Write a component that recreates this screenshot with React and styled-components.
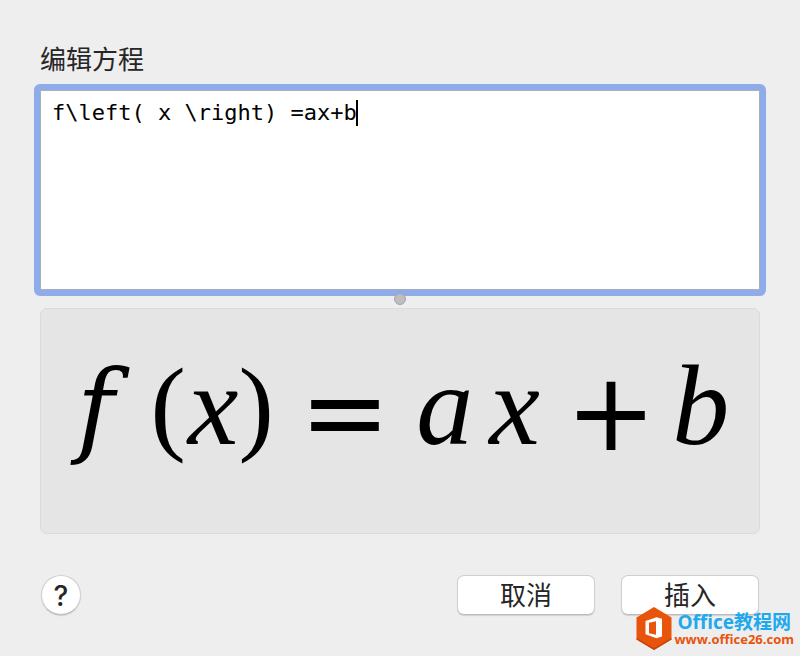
import React, { useState } from "react";
import styled, { createGlobalStyle } from "styled-components";

const GlobalStyle = createGlobalStyle`
  * {
    box-sizing: border-box;
  }
  body {
    margin: 0;
    background: #eeeeee;
    color: #262626;
    font-family: Inter, "Noto Sans CJK SC", sans-serif;
  }
`;

const Dialog = styled.form`
  position: relative;
  display: flex;
  flex-direction: column;
  min-height: 100vh;
  padding: 40px;
`;

const Label = styled.label`
  font-size: 26px;
  line-height: 40px;
  margin-bottom: 4px;
`;

/* Focus ring sticks out 6px past the column */
const Editor = styled.div`
  position: relative;
  display: flex;
  margin: 0 -6px;
  border: 6px solid #8eace9;
  border-radius: 6px;
  background: #8eace9;
  font-family: "DejaVu Sans Mono", monospace;
  font-size: 22px;
  line-height: 26px;
`;

const CodeInput = styled.textarea`
  flex: 1;
  min-width: 0;
  height: 200px;
  padding: 9px 11px;
  border: 1px solid #a6aebf;
  border-radius: 0;
  outline: none;
  resize: none;
  background: #ffffff;
  color: #000000;
  caret-color: transparent;
  font: inherit;
`;

const Caret = styled.span`
  position: absolute;
  top: 10px;
  width: 2px;
  height: 26px;
  background: #000000;
`;

const Grip = styled.div`
  position: relative;
  z-index: 1;
  align-self: center;
  width: 12px;
  height: 12px;
  margin: -3px 0 3px;
  border: 1px solid #a2a5aa;
  border-radius: 50%;
  background: #bdbec0;
`;

const Preview = styled.div`
  display: flex;
  justify-content: center;
  align-items: center;
  padding: 0 0 30px 6px;
  height: 226px;
  border: 1px solid #dadada;
  border-radius: 7px;
  background: #e5e5e5;
  color: #000000;
  font-family: "Liberation Serif", serif;
  font-size: 114px;
  line-height: 128px;
`;

const Symbol = styled.span`
  font-style: italic;
  margin-left: ${({ $gap }) => $gap || 0}px;
`;

const FunctionName = styled(Symbol)`
  padding: 6px 24px 0;
  margin: 0 12px 0 -24px;
  font-family: "DejaVu Serif", serif;
  font-size: 102px;
`;

const Paren = styled(Symbol)`
  font-size: 106px;
  font-style: normal;
`;

const Operator = styled(Symbol)`
  padding-top: 14px;
  font-family: "DejaVu Sans", sans-serif;
  font-size: 108px;
  font-style: normal;
`;

const Footer = styled.div`
  display: flex;
  align-items: center;
  gap: 26px;
  margin-top: 41px;
  padding: 0 1px;
`;

const Button = styled.button`
  width: 138px;
  height: 40px;
  padding: 2px 0 0;
  border: 1px solid #cfcfcf;
  border-bottom-color: #bcbcbc;
  border-radius: 7px;
  background: #ffffff;
  box-shadow: 0 1px 1px rgba(0, 0, 0, 0.12);
  color: #262626;
  font-family: inherit;
  font-size: 26px;
  line-height: 36px;
`;

const HelpButton = styled(Button)`
  width: 40px;
  margin-right: auto;
  border-radius: 50%;
  font-size: 28px;
  font-weight: 500;
`;

const SiteLink = styled.a`
  position: absolute;
  right: 6px;
  bottom: 5px;
  display: flex;
  align-items: center;
  gap: 2px;
  color: #e8540c;
  font-family: "Open Sans", "Noto Sans CJK SC", sans-serif;
  font-weight: 700;
  text-decoration: none;
`;

const SiteName = styled.span`
  display: block;
  padding-left: 3px;
  color: #1fa9ee;
  font-size: 19px;
  line-height: 20px;
  white-space: nowrap;
`;

const SiteAddress = styled.span`
  display: block;
  font-size: 13px;
  line-height: 14px;
`;

const OfficeLogo = () => (
  <svg width="36" height="44" viewBox="0 0 36 44" aria-hidden="true">
    <path d="M18 0L35.5 10.5V32.5L18 43L0.5 32.5V10.5Z" fill="#e8540c" />
    <path d="M0.5 31L18 41L35.5 31V32.5L18 43L0.5 32.5Z" fill="#c9440c" />
    <path
      fillRule="evenodd"
      d="M9.5 14L20.5 10.2L26 11.8V29.4L20.5 31.2L9.5 27.2ZM13 15.8V26.2L20 27.8V14.2Z"
      fill="#ffffff"
    />
  </svg>
);

const App = () => {
  const [code, setCode] = useState("f\\left( x \\right) =ax+b");

  return (
    <>
      <GlobalStyle />
      <Dialog onSubmit={(e) => e.preventDefault()}>
        <Label htmlFor="equation">编辑方程</Label>
        <Editor>
          <CodeInput
            id="equation"
            spellCheck={false}
            value={code}
            onChange={(e) => setCode(e.target.value)}
          />
          <Caret style={{ left: `calc(11px + ${code.length}ch)` }} />
        </Editor>
        <Grip />
        <Preview>
          <FunctionName>f</FunctionName>
          <Paren>(</Paren>
          <Symbol $gap={2}>x</Symbol>
          <Paren>)</Paren>
          <Operator $gap={26}>=</Operator>
          <Symbol $gap={26}>a</Symbol>
          <Symbol $gap={16}>x</Symbol>
          <Operator $gap={26}>+</Operator>
          <Symbol $gap={16}>b</Symbol>
        </Preview>
        <Footer>
          <HelpButton type="button" aria-label="?">
            ?
          </HelpButton>
          <Button type="button">取消</Button>
          <Button type="submit">插入</Button>
        </Footer>
        <SiteLink href="http://www.office26.com">
          <OfficeLogo />
          <span>
            <SiteName>Office教程网</SiteName>
            <SiteAddress>www.office26.com</SiteAddress>
          </span>
        </SiteLink>
      </Dialog>
    </>
  );
};

export default App;
